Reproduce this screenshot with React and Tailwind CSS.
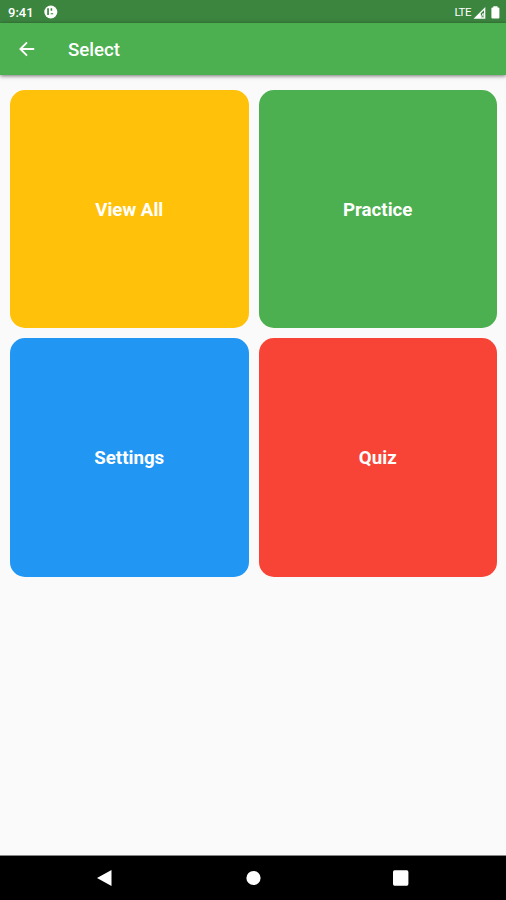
import React from 'react';

const tiles = [
  { label: 'View All', color: 'bg-[#ffc10a]' },
  { label: 'Practice', color: 'bg-[#4caf50]' },
  { label: 'Settings', color: 'bg-[#2196f3]' },
  { label: 'Quiz', color: 'bg-[#f74436]' },
];

function StatusBar() {
  return (
    <div className="flex h-[23px] shrink-0 items-center bg-[#3b853f] pl-2 pr-[6px] pt-[2px] text-white">
      <span className="w-[36px] text-[13px] font-medium leading-none">9:41</span>
      <svg className="-mt-px" width="14" height="14" viewBox="0 0 14 14">
        <circle cx="6.8" cy="7" r="6.5" fill="#fff" />
        <path d="M3.2 3.3h1.7v6.6H3.2zM6.6 3.3h1.6v2.4H6.6zM6.6 8.2h2.6v1.1H6.6z" fill="#3b853f" />
      </svg>
      <span className="ml-auto text-[11.5px] leading-none tracking-[-0.5px]">LTE</span>
      <svg className="ml-[2px]" width="13" height="12" viewBox="0 0 13 12">
        <path d="M12.3 0v11.7H.5z" fill="#fff" />
        <path d="M7.8 6.2 11 3.2v7.1H8z" fill="#3b853f" />
        <path d="M8.3 9.8 10.2 6.4v3.4" fill="none" stroke="#fff" strokeWidth="0.9" />
      </svg>
      <svg className="ml-[5px]" width="9" height="13" viewBox="0 0 9 13">
        <path d="M2.3.3h4.2v1.2h.9q1 0 1 1v9.1q0 1-1 1h-6q-1 0-1-1V2.5q0-1 1-1h.9z" fill="#fff" />
      </svg>
    </div>
  );
}

function AppBar({ title }) {
  return (
    <header className="relative flex h-[52px] shrink-0 items-center bg-[#4caf50] pl-[19px] text-white shadow-[0_1px_4px_rgba(0,0,0,0.55)]">
      <button aria-label="Back" className="mr-[33px]">
        <svg width="16" height="16" viewBox="0 0 16 16" fill="none" stroke="#fff" strokeWidth="1.9">
          <path d="M15.2 8H2M8 1.4 1.4 8 8 14.6" />
        </svg>
      </button>
      <h1 className="pt-[2px] text-[18.7px] font-medium leading-none">{title}</h1>
    </header>
  );
}

function NavBar() {
  return (
    <nav className="h-[45px] shrink-0 border-t border-[#858585] bg-black">
      <svg width="506" height="44" viewBox="0 0 506 44" fill="#fff">
        <path d="M97 22 111.5 14v16z" />
        <circle cx="253.5" cy="22" r="7.1" />
        <rect x="393" y="14.3" width="15.4" height="15.4" rx="1.6" />
      </svg>
    </nav>
  );
}

export default function App() {
  return (
    <div className="flex h-screen flex-col overflow-hidden bg-[#fafafa] font-['Roboto',sans-serif]">
      <StatusBar />
      <AppBar title="Select" />
      <main className="grid flex-1 grid-cols-2 content-start gap-[10px] pl-[10px] pr-[9px] pt-[15px]">
        {tiles.map((tile) => (
          <button
            key={tile.label}
            className={`flex h-[238.3px] items-center justify-center rounded-[15px] pt-px text-[18.7px] font-bold text-white ${tile.color}`}
          >
            {tile.label}
          </button>
        ))}
      </main>
      <NavBar />
    </div>
  );
}
